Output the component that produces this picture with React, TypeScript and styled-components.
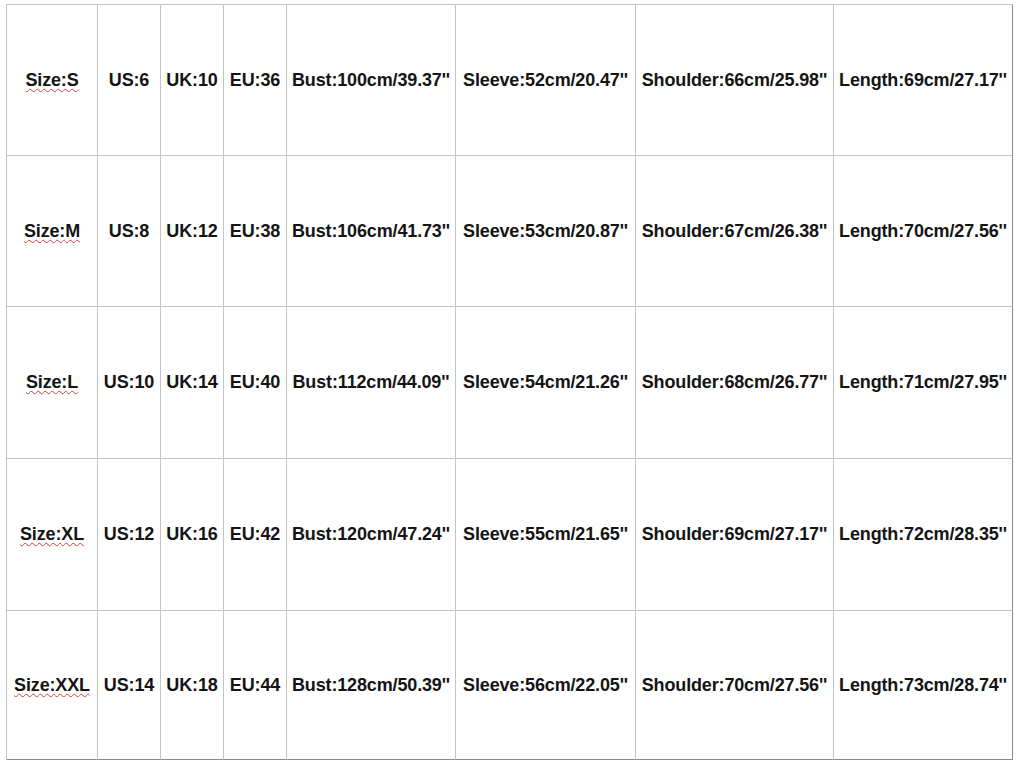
import React from "react";
import styled, { createGlobalStyle } from "styled-components";

const Global = createGlobalStyle`
  html, body { margin: 0; padding: 0; background: #ffffff; }
  body { font-family: "Liberation Sans", Arial, sans-serif; }
`;

const Page = styled.div`
  width: 1018px;
  height: 764px;
  padding: 4px 0 0 6px;
  box-sizing: border-box;
  background: #fff;
`;

const Table = styled.div`
  display: grid;
  grid-template-columns: 91px 63px 63px 63px 169px 180px 198px 179px;
  grid-template-rows: 151px 151px 152px 152px 149px;
  width: max-content;
  border-left: 1px solid #c4c4c4;
  border-top: 1px solid #c4c4c4;
`;

const Cell = styled.div<{ $lastCol?: boolean; $lastRow?: boolean }>`
  box-sizing: border-box;
  display: flex;
  align-items: center;
  justify-content: center;
  border-right: 1px solid ${(p) => (p.$lastCol ? "#8a8a8a" : "#c4c4c4")};
  border-bottom: 1px solid ${(p) => (p.$lastRow ? "#8a8a8a" : "#c4c4c4")};
  font-family: "Liberation Sans", Arial, sans-serif;
  font-weight: bold;
  font-size: 18px;
  color: #141414;
  white-space: nowrap;
  letter-spacing: -0.15px;
`;

const SizeLabel = styled.span`
  text-decoration: underline wavy #d04040;
  text-decoration-thickness: 1px;
  text-underline-offset: 2px;
`;

const rows = [
  ["S", "6", "10", "36", "100cm/39.37", "52cm/20.47", "66cm/25.98", "69cm/27.17"],
  ["M", "8", "12", "38", "106cm/41.73", "53cm/20.87", "67cm/26.38", "70cm/27.56"],
  ["L", "10", "14", "40", "112cm/44.09", "54cm/21.26", "68cm/26.77", "71cm/27.95"],
  ["XL", "12", "16", "42", "120cm/47.24", "55cm/21.65", "69cm/27.17", "72cm/28.35"],
  ["XXL", "14", "18", "44", "128cm/50.39", "56cm/22.05", "70cm/27.56", "73cm/28.74"],
];

export default function App() {
  return (
    <>
      <Global />
      <Page>
        <Table>
          {rows.map((r, i) => {
            const lastRow = i === rows.length - 1;
            const cells = [
              <SizeLabel key="s">Size:{r[0]}</SizeLabel>,
              `US:${r[1]}`,
              `UK:${r[2]}`,
              `EU:${r[3]}`,
              `Bust:${r[4]}''`,
              `Sleeve:${r[5]}''`,
              `Shoulder:${r[6]}''`,
              `Length:${r[7]}''`,
            ];
            return cells.map((c, j) => (
              <Cell key={`${i}-${j}`} $lastCol={j === 7} $lastRow={lastRow}>
                {c}
              </Cell>
            ));
          })}
        </Table>
      </Page>
    </>
  );
}
